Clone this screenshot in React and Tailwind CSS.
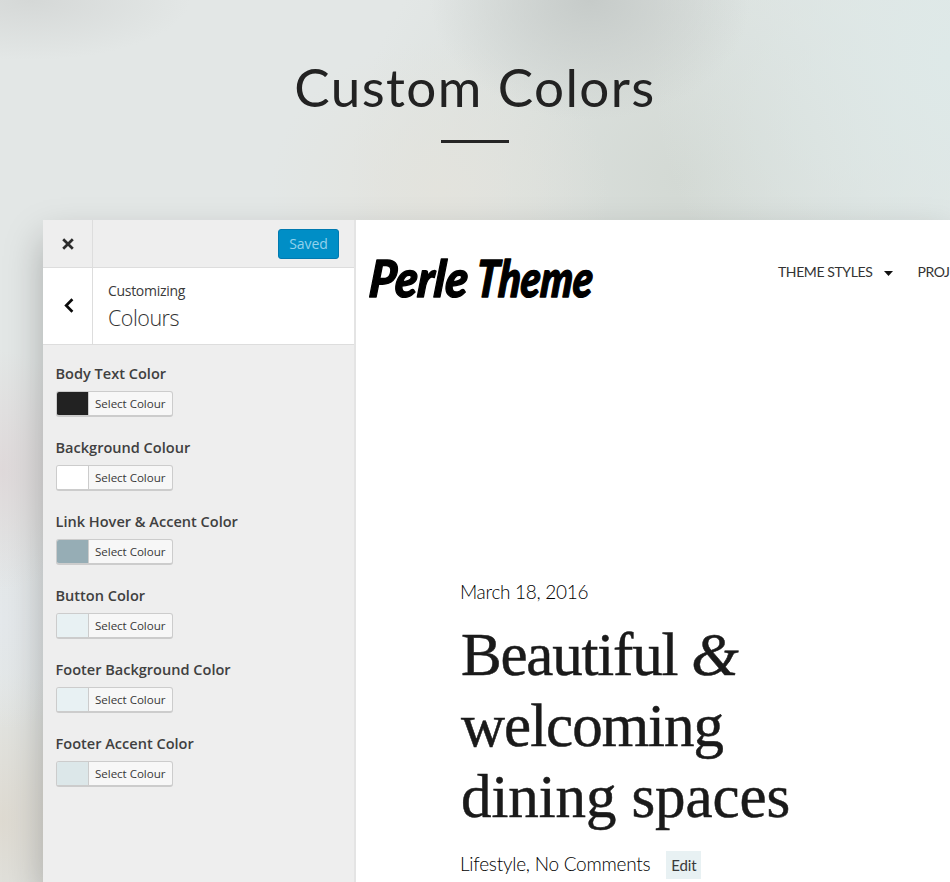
const controls = [
  { label: "Body Text Color", swatch: "bg-[#222222]" },
  { label: "Background Colour", swatch: "bg-white" },
  { label: "Link Hover & Accent Color", swatch: "bg-[#96adb5]" },
  { label: "Button Color", swatch: "bg-[#e8f1f3]" },
  { label: "Footer Background Color", swatch: "bg-[#e8f1f3]" },
  { label: "Footer Accent Color", swatch: "bg-[#dce7e9]" },
];

function ColorControl({ label, swatch }) {
  return (
    <div className="flex h-[74px] flex-col items-start">
      <span className="-ml-[0.5px] h-[29px] text-[14.55px] leading-[22px] font-semibold whitespace-nowrap text-[#404040]">
        {label}
      </span>
      <button className="flex h-[26px] w-[117px] overflow-hidden rounded-[3px] border border-b-2 border-[#cccccc] bg-[#f7f7f7]">
        <span className={`h-full w-[31px] shrink-0 ${swatch}`} />
        <span className="h-full grow border-l border-[#cccccc] pl-1.5 text-left text-[11.6px] leading-[23px] tracking-[-0.05px] whitespace-nowrap text-[#383838]">
          Select Colour
        </span>
      </button>
    </div>
  );
}

function Sidebar() {
  return (
    <aside className="flex w-[313px] shrink-0 flex-col border-r-2 border-[#e4e4e4] bg-[#eeeeee] font-['Open_Sans',sans-serif]">
      <div className="flex h-12 shrink-0 border-b border-[#dddddd]">
        <div className="flex w-[50px] items-center justify-center border-r border-[#dddddd]">
          <svg width="12" height="12" viewBox="0 0 12 12" className="mt-px">
            <path d="M1.2 1.2 10.8 10.8M10.8 1.2 1.2 10.8" stroke="#2b2b2b" strokeWidth="2.7" />
          </svg>
        </div>
        <div className="flex grow items-center justify-end pr-[15px]">
          <button className="h-[30px] w-[61px] rounded-[3px] border border-[#0079b0] bg-[#008ec6] text-[14px] tracking-[-0.1px] text-[#93d2ec]">
            Saved
          </button>
        </div>
      </div>
      <div className="flex h-[77px] shrink-0 border-b border-[#dddddd] bg-white">
        <div className="flex w-[50px] items-center justify-center border-r border-[#dddddd]">
          <svg width="10" height="15" viewBox="0 0 10 15" className="-mt-0.5 ml-0.5">
            <path d="M8.4 1.3 2.2 7.5 8.4 13.7" fill="none" stroke="#0a0a0a" strokeWidth="2.7" />
          </svg>
        </div>
        <div className="flex flex-col pt-[13px] pl-[15px]">
          <span className="text-[14px] leading-5 tracking-[-0.3px] text-[#3a3a3a]">Customizing</span>
          <span className="mt-[3px] text-[21.5px] leading-7 font-light tracking-[-0.5px] text-[#333]">Colours</span>
        </div>
      </div>
      <div className="flex flex-col pt-[17px] pl-[13px]">
        {controls.map((c) => (
          <ColorControl key={c.label} {...c} />
        ))}
      </div>
    </aside>
  );
}

function Preview() {
  return (
    <main className="flex grow flex-col overflow-hidden bg-white font-['Lato',sans-serif] text-[#1a1a1a]">
      <div className="flex h-[100px] shrink-0 items-start">
        <svg width="240" height="60" viewBox="0 0 240 60" className="mt-[30px] ml-[5px] shrink-0 overflow-visible">
          <g fill="#000" stroke="#000" strokeWidth="1.4" strokeLinejoin="round" fontFamily="Lato, sans-serif" fontStyle="italic" fontWeight="900" fontSize="51">
            <text transform="translate(7 47) skewX(-5) scale(0.9 1)">Perle</text>
            <text transform="translate(114 47) skewX(-5) scale(0.795 1)">Theme</text>
          </g>
        </svg>
        <nav className="mt-[42px] ml-[177px] flex items-center text-[14px] leading-5 tracking-[-0.4px] whitespace-nowrap text-[#333]">
          <span>THEME STYLES</span>
          <svg width="9" height="5" viewBox="0 0 9 5" className="mt-0.5 ml-3">
            <path d="M0 0H9L4.5 5Z" fill="#111" />
          </svg>
          <span className="ml-6">PROJ</span>
        </nav>
      </div>
      <article className="mt-[260px] flex flex-col items-start pl-[104px] whitespace-nowrap">
        <span className="text-[19px] leading-6 font-light tracking-[-0.3px] text-black">March 18, 2016</span>
        <h1 className="mt-[15px] pl-px font-['Liberation_Serif',serif] text-[61px] leading-[71px] [-webkit-text-stroke:0.5px_#1a1a1a]">
          <span className="block tracking-[-1.2px]">Beautiful <span className="italic">&amp;</span></span>
          <span className="block tracking-[-1px]">welcoming</span>
          <span className="block tracking-[-0.1px]">dining spaces</span>
        </h1>
        <div className="mt-[19px] flex items-center">
          <span className="-mt-0.5 text-[19px] leading-6 font-light tracking-[-0.25px] text-black">Lifestyle, No Comments</span>
          <span className="ml-4 h-7 w-[35px] bg-[#e8f1f3] text-center text-[15px] leading-7 tracking-[-0.1px] text-[#3a3a3a]">Edit</span>
        </div>
      </article>
    </main>
  );
}

export default function App() {
  return (
    <div className="flex h-[882px] w-[950px] flex-col overflow-hidden bg-[#e3e7e6] bg-[radial-gradient(ellipse_160px_120px_at_590px_0px,#c6cbc9_0%,transparent_100%),radial-gradient(ellipse_160px_60px_at_30px_0px,#d5d8d7_0%,transparent_100%),radial-gradient(ellipse_170px_150px_at_440px_190px,#e3e3dd_0%,transparent_100%),radial-gradient(ellipse_300px_330px_at_950px_60px,#dee9e8_0%,transparent_100%),radial-gradient(ellipse_330px_330px_at_680px_180px,#d3d9d4_0%,transparent_100%),radial-gradient(ellipse_90px_120px_at_0px_470px,#dfd9da_0%,transparent_100%),radial-gradient(ellipse_100px_110px_at_0px_620px,#e4e8eb_0%,transparent_100%),radial-gradient(ellipse_120px_150px_at_0px_820px,#dedad1_0%,transparent_100%)]">
      <header className="flex h-[220px] shrink-0 flex-col items-center">
        <h2 className="mt-[53px] font-['Lato',sans-serif] text-[53px] leading-[68px] tracking-[1.4px] whitespace-nowrap text-[#222]">
          Custom Colors
        </h2>
        <div className="mt-[19px] h-[3px] w-[68px] bg-[#252525]" />
      </header>
      <div className="ml-[43px] flex h-[662px] shadow-[0_18px_36px_rgba(0,0,0,0.26)]">
        <Sidebar />
        <Preview />
      </div>
    </div>
  );
}
